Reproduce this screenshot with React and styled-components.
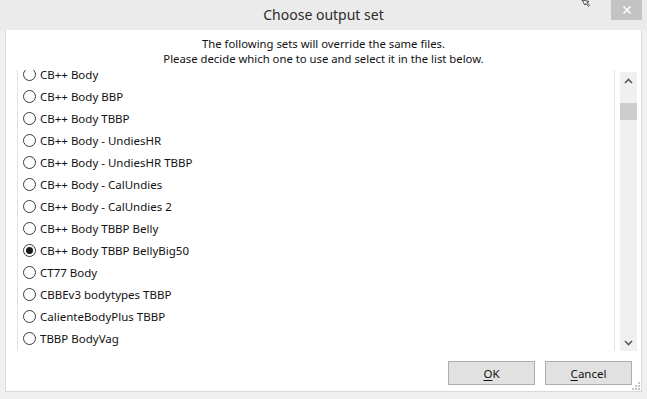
import React from 'react'
import styled, { createGlobalStyle } from 'styled-components'

const sets = [
  'CB++ Body',
  'CB++ Body BBP',
  'CB++ Body TBBP',
  'CB++ Body - UndiesHR',
  'CB++ Body - UndiesHR TBBP',
  'CB++ Body - CalUndies',
  'CB++ Body - CalUndies 2',
  'CB++ Body TBBP Belly',
  'CB++ Body TBBP BellyBig50',
  'CT77 Body',
  'CBBEv3 bodytypes TBBP',
  'CalienteBodyPlus TBBP',
  'TBBP BodyVag',
]

const GlobalStyle = createGlobalStyle`
  body {
    margin: 0;
    background: #f0f0f0;
    font-family: "Noto Sans", "Open Sans", sans-serif;
  }
`

export default () => {
  const selected = 'CB++ Body TBBP BellyBig50'

  return (
    <Window>
      <GlobalStyle />
      <TitleBar>
        <Title>Choose output set</Title>
        <Cursor width='10' height='7' viewBox='0 0 10 7'>
          <path d='M1 0 L4 5 L5 3.5 L7.5 6.5 L8.5 5.5 L6 2.5 L8 1.5 Z' fill='#fff' stroke='#222' strokeWidth='0.8' />
        </Cursor>
        <CloseButton>
          <svg width='10' height='10' viewBox='0 0 10 10'>
            <path d='M1.5 1.5 L8.5 8.5 M8.5 1.5 L1.5 8.5' stroke='#fff' strokeWidth='1.6' />
          </svg>
        </CloseButton>
      </TitleBar>
      <Panel>
        <Message>
          <div>The following sets will override the same files.</div>
          <div>Please decide which one to use and select it in the list below.</div>
        </Message>
        <ListBox>
          <Items>
            <ItemsInner>
              {sets.map(name => (
                <Item key={name}>
                  <Radio checked={name === selected} />
                  {name}
                </Item>
              ))}
            </ItemsInner>
          </Items>
          <ScrollBar>
            <Arrow>
              <svg width='9' height='6' viewBox='0 0 9 6'>
                <path d='M1 5 L4.5 1.5 L8 5' stroke='#5a5a5a' strokeWidth='1.6' fill='none' />
              </svg>
            </Arrow>
            <Track>
              <Thumb />
            </Track>
            <Arrow>
              <svg width='9' height='6' viewBox='0 0 9 6'>
                <path d='M1 1 L4.5 4.5 L8 1' stroke='#5a5a5a' strokeWidth='1.6' fill='none' />
              </svg>
            </Arrow>
          </ScrollBar>
        </ListBox>
        <Footer>
          <Button><u>O</u>K</Button>
          <Button><u>C</u>ancel</Button>
          <Grip width='9' height='9' viewBox='0 0 9 9'>
            <g fill='#c4c4c4'>
              <rect x='7' y='1' width='2' height='2' />
              <rect x='4' y='4' width='2' height='2' />
              <rect x='7' y='4' width='2' height='2' />
              <rect x='1' y='7' width='2' height='2' />
              <rect x='4' y='7' width='2' height='2' />
              <rect x='7' y='7' width='2' height='2' />
            </g>
          </Grip>
        </Footer>
      </Panel>
    </Window>
  )
}

const Window = styled.div`
    width: 647px;
    height: 399px;
    background: #f0f0f0;
    display: flex;
    flex-direction: column;
    overflow: hidden;
`

const TitleBar = styled.div`
    position: relative;
    height: 30px;
    flex: none;
    background: #ebebeb;
    display: flex;
    align-items: center;
    justify-content: center;
`

const Title = styled.div`
    font-size: 14px;
    color: #2b2b2b;
    margin-top: -1px;
`

const Cursor = styled.svg`
    position: absolute;
    left: 581px;
    top: 0;
`

const CloseButton = styled.div`
    position: absolute;
    right: 5px;
    top: 0;
    width: 31px;
    height: 20px;
    background: #c3c3c3;
    display: flex;
    align-items: center;
    justify-content: center;
`

const Panel = styled.div`
    margin: 0 5px 0 5px;
    height: 361px;
    background: #fff;
    border: 1px solid #dadada;
    border-top: none;
    display: flex;
    flex-direction: column;
`

const Message = styled.div`
    font-size: 11.3px;
    line-height: 15px;
    color: #111;
    text-align: center;
    padding-top: 6px;
    height: 34px;
`

const ListBox = styled.div`
    margin: 0 4px 0 11px;
    height: 281px;
    display: flex;
`

const Items = styled.div`
    flex: 1;
    border-left: 1px solid #e2e2e2;
    border-right: 1px solid #e2e2e2;
    overflow: hidden;
`

const ItemsInner = styled.div`
    margin-top: -7px;
`

const Item = styled.div`
    height: 22px;
    display: flex;
    align-items: center;
    padding-left: 5px;
    font-size: 11.5px;
    color: #111;
    white-space: nowrap;
`

const Radio = styled.span`
    width: 11px;
    height: 11px;
    border: 1px solid #3a3a3a;
    border-radius: 50%;
    margin-right: 4px;
    flex: none;
    display: flex;
    align-items: center;
    justify-content: center;
    &::after {
        content: '';
        width: 7px;
        height: 7px;
        border-radius: 50%;
        background: #1a1a1a;
        display: ${p => (p.checked ? 'block' : 'none')};
    }
`

const ScrollBar = styled.div`
    width: 17px;
    margin-left: 5px;
    padding-top: 2px;
    background: #fff;
    display: flex;
    flex-direction: column;
`

const Arrow = styled.div`
    height: 17px;
    background: #f0f0f0;
    display: flex;
    align-items: center;
    justify-content: center;
    flex: none;
`

const Track = styled.div`
    flex: 1;
    background: #f0f0f0;
    padding-top: 14px;
`

const Thumb = styled.div`
    height: 17px;
    background: #cdcdcd;
`

const Footer = styled.div`
    flex: 1;
    position: relative;
    display: flex;
    justify-content: flex-end;
    align-items: flex-start;
    gap: 10px;
    padding: 10px 9px 0 0;
`

const Button = styled.button`
    width: 87px;
    height: 24px;
    background: #e1e1e1;
    border: 1px solid #adadad;
    font-family: "Noto Sans", "Open Sans", sans-serif;
    font-size: 11.5px;
    color: #111;
    padding: 0;
    u {
        text-decoration-thickness: 1px;
        text-underline-offset: 2px;
    }
`

const Grip = styled.svg`
    position: absolute;
    right: 1px;
    bottom: 1px;
`
